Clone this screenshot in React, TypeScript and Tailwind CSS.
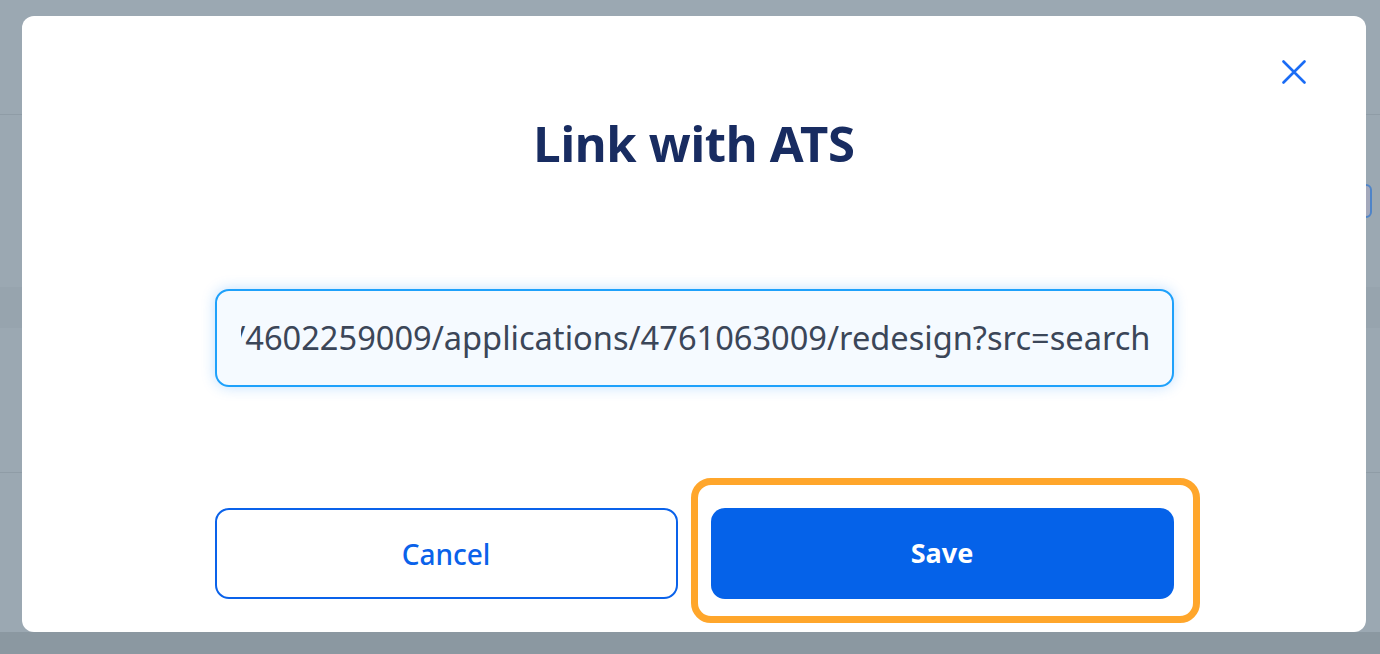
import React from 'react';

const url =
  'https://app.greenhouse.io/people/4602259009/applications/4761063009/redesign?src=search';

const CloseIcon: React.FC = () => (
  <svg width="24" height="24" viewBox="0 0 24 24" fill="none">
    <path d="M1.5 1.5 L22.5 22.5 M22.5 1.5 L1.5 22.5" stroke="#1a6cf5" strokeWidth="2.6" strokeLinecap="round" />
  </svg>
);

const App: React.FC = () => {
  return (
    <div className="relative w-[1380px] h-[654px] overflow-hidden bg-[#9ba8b2] font-['Noto_Sans',sans-serif]">
      {/* page behind the overlay */}
      <div className="flex flex-col h-full">
        <div className="h-[115px] border-b border-[#8f9ca6]" />
        <div className="h-[172px] flex flex-col">
          <div className="h-[69px]" />
          <div className="flex justify-end pr-[8px]">
            <div className="w-[40px] h-[34px] rounded-[6px] border-2 border-[#4f84c8] bg-[#a4a9bb]" />
          </div>
        </div>
        <div className="h-[41px] bg-[#97a4ae]" />
        <div className="h-[145px] border-b border-[#8f9ca6]" />
        <div className="flex-1" />
        <div className="h-[22px] bg-[#8b98a1]" />
      </div>

      {/* modal */}
      <div className="absolute left-[22px] top-[16px] w-[1344px] h-[616px] bg-white rounded-[12px] flex flex-col items-center">
        <button className="absolute right-[60px] top-[44px] w-[24px] h-[24px] flex items-center justify-center">
          <CloseIcon />
        </button>

        <h2 className="mt-[103px] h-[48px] text-[49px] leading-[48px] font-bold text-[#182c61] tracking-[-0.3px]">
          Link with ATS
        </h2>

        <div className="mt-[122px] w-[959px] h-[98px] rounded-[14px] border-2 border-[#1ea1fb] bg-[#f5faff] shadow-[0_0_14px_rgba(30,140,250,0.28)] pl-[24px] pr-[21px] flex items-center">
          <div className="flex-1 overflow-hidden flex justify-end">
            <span className="whitespace-nowrap text-[32.6px] text-[#3b4658]">{url}</span>
          </div>
        </div>

        <div className="mt-[121px] w-[959px] flex justify-between">
          <button className="w-[463px] h-[91px] rounded-[14px] border-2 border-[#0a62ea] bg-white text-[28px] font-medium text-[#0a62ea]">
            Cancel
          </button>
          <div className="relative">
            <div className="absolute -left-[20px] -right-[26px] -top-[30px] -bottom-[24px] rounded-[20px] border-[7px] border-[#ffa62b] pointer-events-none" />
            <button className="w-[463px] h-[91px] rounded-[14px] bg-[#0562e9] text-[27px] font-bold text-white">
              Save
            </button>
          </div>
        </div>
      </div>
    </div>
  );
};

export default App;
